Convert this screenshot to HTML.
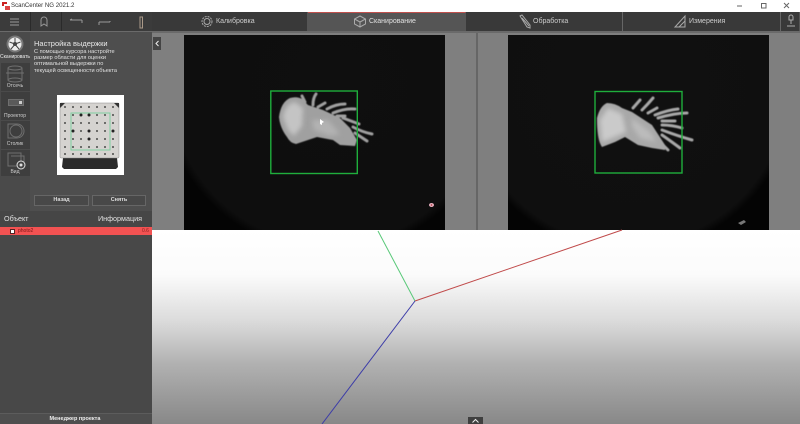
<!DOCTYPE html>
<html lang="ru"><head><meta charset="utf-8"><title>ScanCenter NG</title>
<style>
html,body{margin:0;padding:0;width:800px;height:424px;overflow:hidden;background:#fff}
body{position:relative;font-family:"Liberation Sans","Noto Sans CJK SC",sans-serif;color:#ddd}
#w{position:absolute;left:0;top:0;width:800px;height:424px;filter:blur(.35px);overflow:hidden}
.a{position:absolute;white-space:nowrap}
.b{position:absolute;box-sizing:border-box}
.tb{position:absolute;top:12px;height:20px;width:30px;background:#3b3b3b;border-right:1px solid #2a2a2a}
.tab{position:absolute;top:12px;height:20px;background:#393939;border-right:1px solid #555;box-sizing:border-box}
.tl{position:absolute;font-size:7px;color:#ccc;white-space:nowrap}
.side{position:absolute;left:1px;width:29px;background:#3e3e3e}
.sl{position:absolute;left:0;width:30px;text-align:center;font-size:5px;color:#ccc;white-space:nowrap}
.btn{position:absolute;top:195px;height:11px;border:1px solid #666;box-sizing:border-box;text-align:center;font-size:5.5px;font-weight:bold;line-height:9px;color:#ddd;background:#484848}
svg{position:absolute;overflow:visible}
</style></head><body><div id="w">
<!-- title bar -->
<svg style="left:2px;top:2px" width="9" height="9" viewBox="0 0 9 9"><path d="M0 0h5v2H2v2H0z" fill="#c22"/><path d="M3 4h5v4H3z" fill="#d44"/></svg>
<div class="a" style="left:11px;top:2px;font-size:6.100px;color:#333">ScanCenter NG 2021.2</div>
<svg style="left:735px;top:0" width="65" height="12" viewBox="0 0 65 12" fill="none" stroke="#666"><path d="M2 6h5"/><rect x="26.500" y="3.500" width="4.500" height="4.500"/><path d="M49 3l5 5M54 3l-5 5"/></svg>

<!-- toolbar -->
<div class="b" style="left:0;top:12px;width:800px;height:21px;background:#3a3a3a;border-top:1px solid #222"></div>
<div class="tb" style="left:0"></div><div class="tb" style="left:31px"></div><div class="tb" style="left:62px"></div><div class="tb" style="left:92px"></div><div class="tb" style="left:122px"></div>
<svg style="left:0;top:12px" width="152" height="20" viewBox="0 0 152 20" fill="none" stroke="#999">
<path d="M10 7h9M10 10h9M10 13h9"/>
<path d="M41 14V8a3 3 0 016 0v6l-3-2z"/>
<path d="M70 8h12M70 8l2-1M82 8v3"/>
<path d="M99 10h11M110 9v1M99 10v3"/>
<rect x="140" y="5" width="2.500" height="11" stroke="#a98"/>
</svg>
<!-- tabs -->
<div class="tab" style="left:152px;width:156px"></div>
<div class="tab" style="left:308px;width:158px;background:#555;border-top:1px solid #c0504d"></div>
<div class="tab" style="left:466px;width:157px;border-right:1px solid #666"></div>
<div class="tab" style="left:623px;width:158px;border-right:1px solid #666"></div>
<div class="tab" style="left:781px;width:19px"></div>
<div class="tl" style="left:216px;top:17.500px">Калибровка</div>
<div class="tl" style="left:369px;top:17.500px;color:#e0e0e0">Сканирование</div>
<div class="tl" style="left:533px;top:17.500px">Обработка</div>
<div class="tl" style="left:689px;top:17.500px">Измерения</div>
<svg style="left:0;top:0" width="800" height="33" viewBox="0 0 800 33" fill="none" stroke="#aaa">
<circle cx="207" cy="21.500" r="3"/><circle cx="207" cy="21.500" r="5" stroke-dasharray="2 1"/>
<path d="M360 16l5.500 3v5l-5.500 3-5.500-3v-5zM354.500 19l5.500 3 5.500-3M360 22v5"/>
<path d="M520 16l2-1 8 10 0 3-3-1zM522 18l7 8"/>
<path d="M675 27h10V16zM679 27l6-6"/>
<path d="M789 17a2 2 0 014 0v3h-4zM791 20v4M787 26h8"/>
</svg>
<div class="b" style="left:0;top:31px;width:800px;height:2px;background:#6a6a6a"></div>

<!-- sidebar -->
<div class="b" style="left:0;top:32px;width:152px;height:392px;background:#4a4a4a"></div>
<div class="b" style="left:30px;top:32px;width:122px;height:198px;background:#4e4e4e"></div>
<svg style="left:6px;top:35px" width="18" height="18" viewBox="0 0 18 18"><circle cx="9" cy="9" r="8.500" fill="#777"/><circle cx="9" cy="9" r="6.500" fill="#eee"/><circle cx="9" cy="9" r="2" fill="#444"/><path d="M9 3v4M3.500 7l4 1.500M5 14l3-3.500M13 14l-3-3.500M14.500 7l-4 1.500" stroke="#444"/></svg>
<div class="sl" style="top:54px;color:#eee">Сканировать</div>
<div class="side" style="top:63px;height:28px"></div>
<div class="side" style="top:92px;height:28px"></div>
<div class="side" style="top:121px;height:28px"></div>
<div class="side" style="top:150px;height:26px"></div>
<svg style="left:0;top:63px" width="30" height="112" viewBox="0 0 30 112" fill="none" stroke="#6f6f6f">
<ellipse cx="15" cy="5" rx="7" ry="2"/><path d="M8 5v12M22 5v12M6 10h18"/><ellipse cx="15" cy="17" rx="7" ry="2"/>
<rect x="8.500" y="36.500" width="15" height="6" fill="#5a5a5a"/><rect x="19" y="38" width="3" height="3" fill="#ccc" stroke="none"/>
<path d="M8 61h9a6 6 0 010 14H8z"/><circle cx="16" cy="68" r="6"/>
<rect x="8" y="90" width="13" height="13"/><path d="M11 93h13v10"/><circle cx="21" cy="102" r="4" fill="#444" stroke="#ddd"/><circle cx="21" cy="102" r="1.500" fill="#ddd" stroke="none"/>
</svg>
<div class="sl" style="top:83px">Отсечь</div>
<div class="sl" style="top:112.500px">Проектор</div>
<div class="sl" style="top:141px">Столик</div>
<div class="sl" style="top:169px">Вид</div>

<div class="a" style="left:34px;top:39px;font-size:7.500px;color:#e8e8e8">Настройка выдержки</div>
<div class="a" style="left:34px;top:49px;font-size:5.600px;line-height:6.200px;color:#e0e0e0">С помощью курсора настройте<br>размер области для оценки<br>оптимальной выдержки по<br>текущей освещенности объекта</div>

<!-- calibration card -->
<svg style="left:57px;top:95px" width="67" height="80" viewBox="57 95 67 80">
<rect x="57" y="95" width="67" height="80" fill="#fff"/>
<path d="M63 158h54l1 9-2 2H64l-2-2z" fill="#2b2b2b"/>
<rect x="60" y="103" width="59" height="55" rx="1" fill="#d5d3d0" stroke="#888" stroke-width=".5"/>
<path d="M60 103h5l-5 5zM119 103h-5l5 5z" fill="#333"/>
<g fill="#222">
<circle cx="65" cy="107" r=".9"/><circle cx="73" cy="107" r=".9"/><circle cx="81" cy="107" r=".9"/><circle cx="89" cy="107" r=".9"/><circle cx="97" cy="107" r=".9"/><circle cx="105" cy="107" r=".9"/><circle cx="113" cy="107" r=".9"/>
<circle cx="65" cy="115" r=".9"/><circle cx="73" cy="115" r=".9"/><circle cx="81" cy="115" r="1.500"/><circle cx="89" cy="115" r="1.500"/><circle cx="97" cy="115" r=".9"/><circle cx="105" cy="115" r=".9"/><circle cx="113" cy="115" r=".9"/>
<circle cx="65" cy="123" r=".9"/><circle cx="73" cy="123" r=".9"/><circle cx="81" cy="123" r=".9"/><circle cx="89" cy="123" r=".9"/><circle cx="97" cy="123" r=".9"/><circle cx="105" cy="123" r=".9"/><circle cx="113" cy="123" r=".9"/>
<circle cx="65" cy="131" r=".9"/><circle cx="73" cy="131" r="1.500"/><circle cx="81" cy="131" r=".9"/><circle cx="89" cy="131" r="1.500"/><circle cx="97" cy="131" r=".9"/><circle cx="105" cy="131" r=".9"/><circle cx="113" cy="131" r="1.500"/>
<circle cx="65" cy="139" r=".9"/><circle cx="73" cy="139" r=".9"/><circle cx="81" cy="139" r=".9"/><circle cx="89" cy="139" r="1.500"/><circle cx="97" cy="139" r=".9"/><circle cx="105" cy="139" r=".9"/><circle cx="113" cy="139" r=".9"/>
<circle cx="65" cy="147" r=".9"/><circle cx="73" cy="147" r=".9"/><circle cx="81" cy="147" r=".9"/><circle cx="89" cy="147" r=".9"/><circle cx="97" cy="147" r=".9"/><circle cx="105" cy="147" r=".9"/><circle cx="113" cy="147" r=".9"/>
<circle cx="65" cy="154" r=".9"/><circle cx="73" cy="154" r=".9"/><circle cx="81" cy="154" r=".9"/><circle cx="89" cy="154" r=".9"/><circle cx="97" cy="154" r=".9"/><circle cx="105" cy="154" r=".9"/><circle cx="113" cy="154" r=".9"/>
</g>
<rect x="71" y="113" width="39" height="37" fill="none" stroke="#7fcf9f" stroke-width="1"/>
</svg>

<div class="btn" style="left:34px;width:55px">Назад</div>
<div class="btn" style="left:92px;width:54px">Снять</div>
<div class="b" style="left:0;top:211px;width:152px;height:16px;background:#464646"></div>
<div class="a" style="left:4px;top:214px;font-size:7.200px;color:#e0e0e0">Объект</div>
<div class="a" style="right:658px;top:214px;font-size:7.200px;color:#e0e0e0">Информация</div>
<div class="b" style="left:0;top:227px;width:152px;height:8px;background:#f25252"></div>
<div class="b" style="left:10px;top:229px;width:5px;height:5px;background:#fff;border:1px solid #522"></div>
<div class="a" style="left:18px;top:228px;font-size:5px;color:#7a1414">photo2</div>
<div class="a" style="left:142px;top:228px;font-size:5px;color:#8a2020">0.6</div>
<div class="b" style="left:0;top:235px;width:152px;height:179px;background:#484848"></div>
<div class="b" style="left:0;top:413px;width:152px;height:11px;background:#4e4e4e;border-top:1px solid #5c5c5c"></div>
<div class="a" style="left:0;top:416px;width:150px;text-align:center;font-size:5.500px;font-weight:bold;color:#eee">Менеджер проекта</div>

<!-- viewer -->
<div class="b" style="left:152px;top:33px;width:648px;height:197px;background:#7f7f7f"></div>
<div class="b" style="left:153px;top:37px;width:8px;height:13px;background:#444"></div>
<svg style="left:153px;top:37px" width="8" height="13" fill="none" stroke="#eee"><path d="M5.500 4L3 6.500 5.500 9"/></svg>
<div class="b" style="left:476px;top:33px;width:1.500px;height:197px;background:#666"></div>
<div class="b" style="left:184px;top:35px;width:261px;height:195px;background:radial-gradient(circle 168px at 146px 50px,#0f0f0f 0,#0e0e0e 95%,#060606 99%,#040404 100%)"></div>
<div class="b" style="left:508px;top:35px;width:261px;height:195px;background:radial-gradient(circle 168px at 120px 50px,#101010 0,#0f0f0f 95%,#060606 99%,#040404 100%)"></div>

<svg style="left:0;top:0" width="800" height="230" viewBox="0 0 800 230" fill="none">
<defs>
<filter id="s" x="-10%" y="-10%" width="120%" height="120%"><feGaussianBlur stdDeviation=".6"/></filter>
<filter id="t" x="-30%" y="-30%" width="160%" height="160%"><feGaussianBlur stdDeviation="2.500"/></filter>
</defs>
<!-- left object -->
<g filter="url(#s)">
<g stroke="#a0a0a0" stroke-width="3" stroke-linecap="round">
<path d="M305 102L302 96M313 105Q313 98 316 94M318 107L325 103M327 109Q336 104 345 104M333 113Q345 108 355 109M337 116L345 116M343 118L359 124M353 127Q362 132 372 134M355 133L367 141"/>
</g>
<path d="M279 117Q281 102 290 98Q297 96 302 99L308 105 323 110 340 118 350 128 357 140 355 146 340 145 333 140 317 137Q305 141 296 144Q290 143 287 137Q280 128 279 117Z" fill="#a0a0a0"/>
</g>
<path d="M283 117Q285 104 295 102L303 108 302 126 294 136 288 130Z" fill="#c4c4c4" filter="url(#t)"/>
<path d="M312 120l16 0 12 14-10 2-16-6z" fill="#b2b2b2" filter="url(#t)"/>
<path d="M320 119l4 3-2 1v2l-2-1z" fill="#fff"/>
<!-- right object -->
<g filter="url(#s)">
<g stroke="#a8a8a8" stroke-width="3" stroke-linecap="round">
<path d="M633 108l7-8M642 110Q648 104 653 98M648 113l9-5M655 115Q668 110 678 109M658 118Q675 113 687 113M662 121l13 0M662 125Q672 125 682 128M662 130Q678 136 692 140M662 135Q672 142 680 148M658 140l10 10"/>
</g>
<path d="M597 118Q600 106 607 103Q615 103 622 108L632 112 652 125 665 145 665 150 652 148 638 145 625 137 615 142 602 147Q597 140 597 118Z" fill="#a8a8a8"/>
</g>
<path d="M600 120l8-12 14 6 4 18-14 6-10 4z" fill="#cacaca" filter="url(#t)"/>
<path d="M632 118l18 14 6 10-16-4-8-12z" fill="#bcbcbc" filter="url(#t)"/>
<!-- boxes -->
<rect x="270.800" y="91" width="86.500" height="82.500" stroke="#1fae3c" stroke-width="1.400"/>
<rect x="595" y="91.500" width="87" height="81.500" stroke="#1fae3c" stroke-width="1.400"/>
<!-- specks -->
<ellipse cx="431.500" cy="205" rx="2.500" ry="2" fill="#e8b0c0"/><circle cx="431.500" cy="205" r=".8" fill="#a33"/>
<path d="M738 223l6-3 2 2-5 3z" fill="#777"/>
</svg>

<!-- 3D view -->
<div class="b" style="left:152px;top:230px;width:648px;height:194px;background:linear-gradient(#fff 0,#fbfbfb 45px,#dcdcdc 90px,#b0b0b0 135px,#888 194px)"></div>
<svg style="left:0;top:0" width="800" height="424" viewBox="0 0 800 424" fill="none">
<path d="M378 231L415 301" stroke="#58c878" stroke-width="1"/>
<path d="M415 301L622 230" stroke="#c04a4a" stroke-width="1"/>
<path d="M415 301L322 424" stroke="#3c3ca8" stroke-width="1"/>
</svg>
<div class="b" style="left:468px;top:417px;width:15px;height:7px;background:#3f3f3f"></div>
<svg style="left:468px;top:417px" width="15" height="7" fill="none" stroke="#eee"><path d="M4.500 5.500L7.500 2.500 10.500 5.500"/></svg>
</div></body></html>
